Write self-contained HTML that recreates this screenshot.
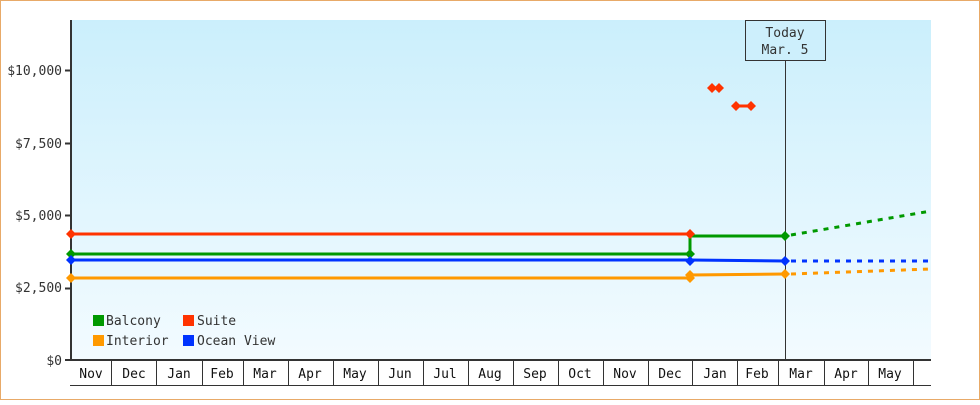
<!DOCTYPE html>
<html><head><style>
body{margin:0;background:#fff}
</style></head><body>
<svg width="980" height="400" xmlns="http://www.w3.org/2000/svg" font-family="'DejaVu Sans Mono','Liberation Mono',monospace" font-size="13" fill="#333">
<defs><linearGradient id="g" x1="0" y1="0" x2="0" y2="1"><stop offset="0" stop-color="#cbeffc"/><stop offset="1" stop-color="#f3fbff"/></linearGradient></defs>
<rect x="0.5" y="0.5" width="979" height="399" fill="#fff" stroke="#e8aa68"/>
<rect x="71" y="20" width="860" height="340" fill="url(#g)"/>
<!-- y axis -->
<line x1="71" y1="20" x2="71" y2="361" stroke="#333" stroke-width="2"/>
<g stroke="#333" stroke-width="2">
<line x1="65" y1="70.5" x2="71" y2="70.5"/><line x1="65" y1="143.5" x2="71" y2="143.5"/><line x1="65" y1="215.5" x2="71" y2="215.5"/><line x1="65" y1="288.5" x2="71" y2="288.5"/><line x1="65" y1="360" x2="931" y2="360"/>
</g>
<g text-anchor="end">
<text x="62" y="75">$10,000</text><text x="62" y="148">$7,500</text><text x="62" y="220">$5,000</text><text x="62" y="292">$2,500</text><text x="62" y="365">$0</text>
</g>
<!-- x axis cells -->
<line x1="70" y1="385.5" x2="931" y2="385.5" stroke="#333"/>
<g stroke="#333">
<line x1="111.5" y1="360" x2="111.5" y2="385"/><line x1="156.5" y1="360" x2="156.5" y2="385"/><line x1="202.5" y1="360" x2="202.5" y2="385"/><line x1="243.5" y1="360" x2="243.5" y2="385"/><line x1="288.5" y1="360" x2="288.5" y2="385"/><line x1="333.5" y1="360" x2="333.5" y2="385"/><line x1="378.5" y1="360" x2="378.5" y2="385"/><line x1="423.5" y1="360" x2="423.5" y2="385"/><line x1="468.5" y1="360" x2="468.5" y2="385"/><line x1="513.5" y1="360" x2="513.5" y2="385"/><line x1="558.5" y1="360" x2="558.5" y2="385"/><line x1="603.5" y1="360" x2="603.5" y2="385"/><line x1="648.5" y1="360" x2="648.5" y2="385"/><line x1="692.5" y1="360" x2="692.5" y2="385"/><line x1="737.5" y1="360" x2="737.5" y2="385"/><line x1="778.5" y1="360" x2="778.5" y2="385"/><line x1="824.5" y1="360" x2="824.5" y2="385"/><line x1="868.5" y1="360" x2="868.5" y2="385"/><line x1="913.5" y1="360" x2="913.5" y2="385"/>
</g>
<g text-anchor="middle" fill="#111">
<text x="91" y="378">Nov</text><text x="134" y="378">Dec</text><text x="179" y="378">Jan</text><text x="222" y="378">Feb</text><text x="265" y="378">Mar</text><text x="310" y="378">Apr</text><text x="355" y="378">May</text><text x="400" y="378">Jun</text><text x="445" y="378">Jul</text><text x="490" y="378">Aug</text><text x="535" y="378">Sep</text><text x="580" y="378">Oct</text><text x="625" y="378">Nov</text><text x="670" y="378">Dec</text><text x="715" y="378">Jan</text><text x="757" y="378">Feb</text><text x="801" y="378">Mar</text><text x="846" y="378">Apr</text><text x="890" y="378">May</text>
</g>
<!-- today -->
<line x1="785.5" y1="60" x2="785.5" y2="360" stroke="#333"/>
<rect x="745.5" y="20.5" width="80" height="40" fill="#cdeffc" stroke="#333"/>
<text x="785" y="37" text-anchor="middle">Today</text>
<text x="785" y="54" text-anchor="middle">Mar. 5</text>
<!-- series -->
<g stroke-width="3" fill="none">
<polyline points="71,234 690,234" stroke="#ff3300"/>
<polyline points="71,254 690,254 690,236 785,236" stroke="#009900"/>
<polyline points="71,260 690,260 785,261" stroke="#0033ff"/>
<polyline points="71,278 690,278 690,275 785,274" stroke="#ff9900"/>
<polyline points="791,235 931,211" stroke="#009900" stroke-dasharray="5,6"/>
<polyline points="791,261 931,261" stroke="#0033ff" stroke-dasharray="5,6"/>
<polyline points="791,274 931,269" stroke="#ff9900" stroke-dasharray="5,6"/>
<polyline points="736,106 751,106" stroke="#ff3300"/>
</g>
<g>
<g fill="#ff3300"><path d="M71,229l5,5-5,5-5-5z"/><path d="M690,229l5,5-5,5-5-5z"/><path d="M712,83l5,5-5,5-5-5z"/><path d="M719,83l5,5-5,5-5-5z"/><path d="M736,101l5,5-5,5-5-5z"/><path d="M751,101l5,5-5,5-5-5z"/></g>
<g fill="#009900"><path d="M71,249l5,5-5,5-5-5z"/><path d="M690,249l5,5-5,5-5-5z"/><path d="M785,231l5,5-5,5-5-5z"/></g>
<g fill="#0033ff"><path d="M71,255l5,5-5,5-5-5z"/><path d="M690,256l5,5-5,5-5-5z"/><path d="M785,256l5,5-5,5-5-5z"/></g>
<g fill="#ff9900"><path d="M71,273l5,5-5,5-5-5z"/><path d="M690,273l5,5-5,5-5-5z"/><path d="M690,270l5,5-5,5-5-5z"/><path d="M785,269l5,5-5,5-5-5z"/></g>
</g>
<!-- legend -->
<rect x="93" y="315" width="11" height="11" fill="#009900"/><text x="106" y="325">Balcony</text>
<rect x="183" y="315" width="11" height="11" fill="#ff3300"/><text x="197" y="325">Suite</text>
<rect x="93" y="335" width="11" height="11" fill="#ff9900"/><text x="106" y="345">Interior</text>
<rect x="183" y="335" width="11" height="11" fill="#0033ff"/><text x="197" y="345">Ocean View</text>
</svg>
</body></html>
